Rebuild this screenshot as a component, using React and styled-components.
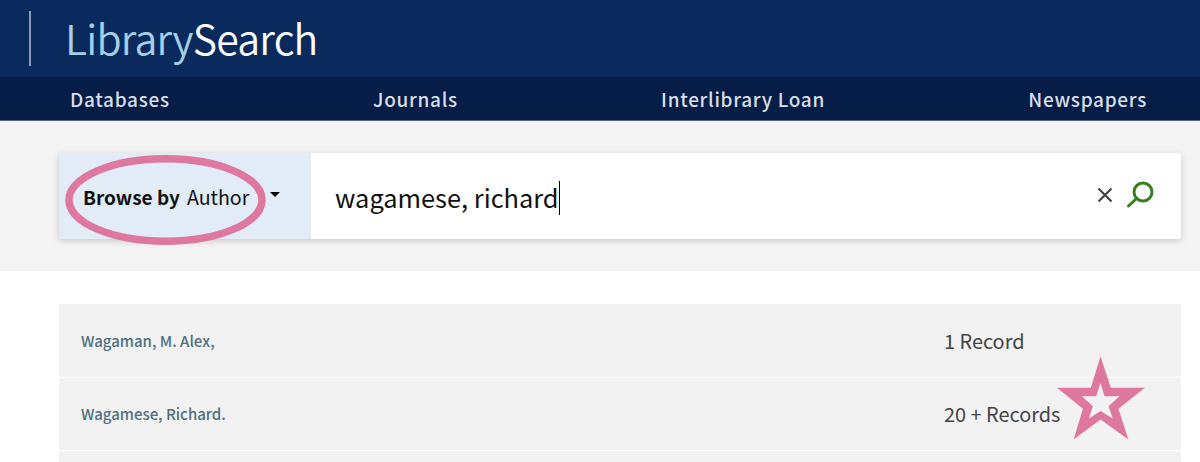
import React from "react";
import styled, { createGlobalStyle } from "styled-components";

const Global = createGlobalStyle`
  html, body { margin: 0; padding: 0; background: #fff; overflow: hidden; }
  body { font-family: "Noto Sans CJK SC", "Noto Sans", sans-serif; }
`;
const Page = styled.div`
  position: relative;
  width: 1200px;
  height: 462px;
  overflow: hidden;
`;
const Header = styled.header`
  height: 77px;
  background: #0a2a5e;
  display: flex;
  align-items: center;
  padding-left: 29px;
  box-sizing: border-box;
`;
const Divider = styled.div`
  width: 2px;
  height: 55px;
  margin-top: -1px;
  background: #8b9bb5;
`;
const Logo = styled.div`
  margin-left: 34px;
  margin-top: -3px;
  font-size: 41px;
  letter-spacing: -0.8px;
  line-height: 56px;
  font-weight: 350;
  color: #fff;
`;
const LogoAccent = styled.span`
  color: #a5cfe4;
`;
const Nav = styled.nav`
  height: 44px;
  box-sizing: border-box;
  background: #051d47;
  border-bottom: 1px solid #56687f;
  display: flex;
  justify-content: space-between;
  padding: 0 53px 0 70px;
  align-items: center;
`;
const NavLink = styled.a`
  font-size: 19px;
  font-weight: 500;
  letter-spacing: 0.7px;
  line-height: 44px;
  color: #d9dfe7;
`;
const SearchBand = styled.section`
  height: 150px;
  background: #f4f4f4;
  box-sizing: border-box;
  padding: 32px 19px 0 59px;
`;
const SearchBar = styled.div`
  height: 86px;
  display: flex;
  background: #fff;
  border-radius: 3px;
  box-shadow: 0 2px 7px rgba(0, 0, 0, 0.18);
  overflow: hidden;
`;
const Scope = styled.div`
  width: 252px;
  flex: none;
  background: #e1ecf7;
  display: flex;
  align-items: center;
  box-sizing: border-box;
  padding: 2px 0 0 24px;
  font-size: 19px;
  line-height: 28px;
  color: #111;
`;
const ScopeLabel = styled.strong`
  font-weight: 700;
  margin-right: 7px;
`;
const ScopeValue = styled.span`
  font-size: 19.600px;
`;
const Caret = styled.span`
  width: 0;
  height: 0;
  margin: -6px 0 0 21px;
  border-left: 5px solid transparent;
  border-right: 5px solid transparent;
  border-top: 5px solid #000;
`;
const Query = styled.div`
  flex: 1;
  display: flex;
  align-items: center;
  padding-left: 24px;
  font-size: 25.4px;
  line-height: 36px;
  color: #111;
`;
const QueryText = styled.span`
  margin-top: 2px;
`;
const Cursor = styled.span`
  width: 1px;
  height: 34px;
  margin: 3px 0 0 0;
  background: #000;
`;
const Spacer = styled.span`
  flex: 1;
`;
const Actions = styled.div`
  display: flex;
  align-items: center;
  gap: 11px;
  padding-right: 26px;
  margin-top: -3px;
`;
const Results = styled.section`
  margin: 33px 19px 0 59px;
  display: flex;
  flex-direction: column;
  gap: 1px;
`;
const Row = styled.div`
  height: 72.5px;
  flex: none;
  background: #f2f2f2;
  display: flex;
  align-items: center;
  box-sizing: border-box;
  padding: 1px 0 0 22px;
`;
const Name = styled.a`
  width: 863px;
  font-size: 15px;
  font-weight: 500;
  line-height: 20px;
  color: #4e707f;
`;
const Count = styled.span`
  font-size: 19.9px;
  line-height: 28px;
  color: #444;
`;
const RingMark = styled.svg`
  position: absolute;
  left: 62px;
  top: 150px;
`;
const StarMark = styled.svg`
  position: absolute;
  left: 1057px;
  top: 356px;
`;

export default function App() {
  return (
    <Page>
      <Global />
      <Header>
        <Divider />
        <Logo><LogoAccent>Library</LogoAccent>Search</Logo>
      </Header>
      <Nav>
        <NavLink>Databases</NavLink>
        <NavLink>Journals</NavLink>
        <NavLink>Interlibrary Loan</NavLink>
        <NavLink>Newspapers</NavLink>
      </Nav>
      <SearchBand>
        <SearchBar>
          <Scope>
            <ScopeLabel>Browse by</ScopeLabel>
            <ScopeValue>Author</ScopeValue>
            <Caret />
          </Scope>
          <Query>
            <QueryText>wagamese, richard</QueryText>
            <Cursor />
            <Spacer />
            <Actions>
              <svg width="18" height="18" viewBox="0 0 18 18" fill="none" stroke="#444" strokeWidth="2.2">
                <path d="M2.5 2.5 L15.5 15.5 M15.5 2.5 L2.5 15.5" />
              </svg>
              <svg width="30" height="30" viewBox="0 0 30 30" fill="none" stroke="#35801f" strokeWidth="3">
                <circle cx="18" cy="12" r="9" />
                <path d="M11.5 18.5 L3.5 26" strokeLinecap="round" />
              </svg>
            </Actions>
          </Query>
        </SearchBar>
      </SearchBand>
      <Results>
        <Row><Name>Wagaman, M. Alex,</Name><Count>1 Record</Count></Row>
        <Row><Name>Wagamese, Richard.</Name><Count>20 + Records</Count></Row>
        <Row />
      </Results>
      <RingMark width="210" height="100" viewBox="0 0 210 100" fill="none">
        <ellipse cx="103.500" cy="50" rx="96.500" ry="41.250" stroke="#df789f" strokeWidth="7.500" />
      </RingMark>
      <StarMark width="88" height="84" viewBox="410 107 265 252">
        <path
          fillRule="evenodd"
          fill="#df789f"
          d="M541 107 L572 202 L675 202 L595 265 L625 358 L541 298 L460 358 L488 265 L410 202 L512 202 Z M541 188 L528 228 L485 228 L518 258 L506 295 L541 272 L578 295 L565 258 L598 228 L553 228 Z"
        />
      </StarMark>
    </Page>
  );
}
